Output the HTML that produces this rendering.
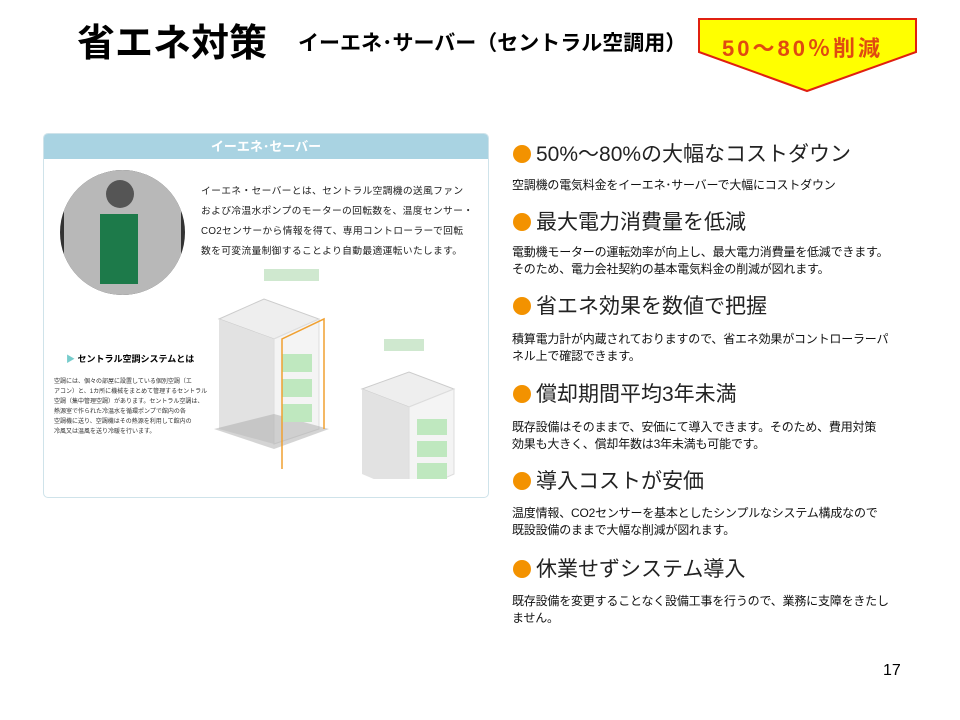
<!DOCTYPE html><html><head><meta charset="utf-8"><style>
body{margin:0;width:960px;height:720px;background:#fff;position:relative;overflow:hidden;font-family:"Liberation Sans","Noto Sans CJK JP",sans-serif;}
.a{position:absolute;white-space:nowrap;}
.h{position:absolute;left:513px;font-size:21px;color:#222;white-space:nowrap;}
.h b{display:inline-block;width:18px;height:18px;border-radius:50%;background:#f39200;margin-right:5px;vertical-align:-2px;}
.t{position:absolute;left:512px;font-size:12px;line-height:17px;color:#111;white-space:nowrap;letter-spacing:-0.2px;}
</style></head><body>
<div class="a" style="left:77px;top:12px;font-size:38px;font-weight:bold;">省エネ対策</div>
<div class="a" style="left:298px;top:27px;font-size:21px;font-weight:bold;">イーエネ･サーバー（セントラル空調用）</div>
<svg class="a" style="left:0;top:0" width="960" height="100"><polygon points="699,19 916,19 916,52 807,91 699,52" fill="#ffff00" stroke="#e02010" stroke-width="2"/></svg>
<div class="a" style="left:722px;top:31px;font-size:22px;font-weight:bold;color:#e04a10;letter-spacing:3px;">50～80％削減</div>

<div class="a" style="left:43px;top:133px;width:444px;height:363px;border:1px solid #cfe3ea;border-radius:5px;background:#fff;overflow:hidden;">
<div style="height:25px;background:#a9d3e2;color:#fff;font-weight:bold;font-size:13px;text-align:center;line-height:25px;">イーエネ･セーバー</div>
<div class="a" style="left:16px;top:36px;width:125px;height:125px;border-radius:50%;background:#333;overflow:hidden;"><div style="position:absolute;left:4px;top:0;width:117px;height:125px;background:#b8b8b8;"></div><div style="position:absolute;left:40px;top:44px;width:38px;height:70px;background:#1d7a4a;"></div><div style="position:absolute;left:46px;top:10px;width:28px;height:28px;border-radius:50%;background:#555;"></div></div>
<div class="a" style="left:157px;top:48px;font-size:9.8px;line-height:20px;color:#222;letter-spacing:0.3px;">イーエネ・セーバーとは、セントラル空調機の送風ファン<br>および冷温水ポンプのモーターの回転数を、温度センサー・<br>CO2センサーから情報を得て、専用コントローラーで回転<br>数を可変流量制御することより自動最適運転いたします。</div>
<div class="a" style="left:22px;top:218px;font-size:9px;font-weight:bold;"><span style="color:#7cc">▶</span> セントラル空調システムとは</div>
<div class="a" style="left:10px;top:243px;font-size:6px;line-height:10px;color:#333;">空調には、個々の部屋に設置している個別空調（エ<br>アコン）と、1カ所に機械をまとめて管理するセントラル<br>空調（集中管理空調）があります。セントラル空調は、<br>熱源室で作られた冷温水を循環ポンプで館内の各<br>空調機に送り、空調機はその熱源を利用して館内の<br>冷風又は温風を送り冷暖を行います。</div>
<svg class="a" style="left:160px;top:135px" width="280" height="210">
<rect x="60" y="0" width="55" height="12" fill="#cfe8cf"/>
<polygon points="15,50 60,30 115,50 70,70" fill="#eee" stroke="#ccc"/>
<polygon points="15,50 70,70 70,175 15,160" fill="#e2e2e2"/>
<polygon points="70,70 115,50 115,160 70,175" fill="#f4f4f4" stroke="#ddd"/>
<polygon points="10,160 70,180 125,160 70,145" fill="#aaa" opacity="0.5"/>
<rect x="78" y="85" width="30" height="18" fill="#bfe8bf"/><rect x="78" y="110" width="30" height="18" fill="#bfe8bf"/><rect x="78" y="135" width="30" height="18" fill="#bfe8bf"/>
<polyline points="78,200 78,70 120,50 120,160" fill="none" stroke="#f0a030" stroke-width="1.5"/>
<rect x="180" y="70" width="40" height="12" fill="#cfe8cf"/>
<polygon points="158,120 205,103 250,120 205,138" fill="#eee" stroke="#ccc"/>
<polygon points="158,120 205,138 205,225 158,205" fill="#e2e2e2"/>
<polygon points="205,138 250,120 250,205 205,225" fill="#f4f4f4" stroke="#ddd"/>
<rect x="213" y="150" width="30" height="16" fill="#bfe8bf"/><rect x="213" y="172" width="30" height="16" fill="#bfe8bf"/><rect x="213" y="194" width="30" height="16" fill="#bfe8bf"/>
</svg>
</div>

<div class="h" style="top:138px"><b></b>50%～80%の大幅なコストダウン</div>
<div class="t" style="top:177px">空調機の電気料金をイーエネ･サーバーで大幅にコストダウン</div>
<div class="h" style="top:206px"><b></b>最大電力消費量を低減</div>
<div class="t" style="top:244px">電動機モーターの運転効率が向上し、最大電力消費量を低減できます。<br>そのため、電力会社契約の基本電気料金の削減が図れます。</div>
<div class="h" style="top:290px"><b></b>省エネ効果を数値で把握</div>
<div class="t" style="top:331px">積算電力計が内蔵されておりますので、省エネ効果がコントローラーパ<br>ネル上で確認できます。</div>
<div class="h" style="top:378px"><b></b>償却期間平均3年未満</div>
<div class="t" style="top:419px">既存設備はそのままで、安価にて導入できます。そのため、費用対策<br>効果も大きく、償却年数は3年未満も可能です。</div>
<div class="h" style="top:465px"><b></b>導入コストが安価</div>
<div class="t" style="top:505px">温度情報、CO2センサーを基本としたシンプルなシステム構成なので<br>既設設備のままで大幅な削減が図れます。</div>
<div class="h" style="top:553px"><b></b>休業せずシステム導入</div>
<div class="t" style="top:593px">既存設備を変更することなく設備工事を行うので、業務に支障をきたし<br>ません。</div>
<div class="a" style="left:883px;top:662px;font-size:16px;">17</div>
</body></html>
